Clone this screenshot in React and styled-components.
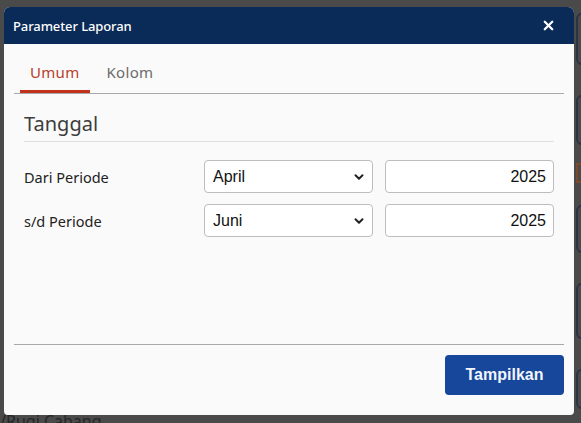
import React, { useState } from 'react'
import styled, { createGlobalStyle } from 'styled-components'
import { X, ChevronDown } from 'lucide-react'

const GlobalStyle = createGlobalStyle`
    html, body {
        margin: 0;
        padding: 0;
        background: #4a4a4a;
        overflow: hidden;
    }
    * {
        box-sizing: border-box;
    }
`

const months = ['Januari', 'Februari', 'Maret', 'April', 'Mei', 'Juni', 'Juli', 'Agustus', 'September', 'Oktober', 'November', 'Desember']

const App = () => {
    const [tab, setTab] = useState('umum')
    const [fromMonth, setFromMonth] = useState('April')
    const [toMonth, setToMonth] = useState('Juni')
    const [fromYear, setFromYear] = useState('2025')
    const [toYear, setToYear] = useState('2025')

    return (
        <>
            <GlobalStyle />
            <Page>
                <Main>
                    <Modal>
                        <Header>
                            <Title>Parameter Laporan</Title>
                            <CloseButton title="tutup">
                                <X size={15} strokeWidth={3.6} />
                            </CloseButton>
                        </Header>
                        <Body>
                            <TabList>
                                <Tab isActive={tab === 'umum'} onClick={() => setTab('umum')}>Umum</Tab>
                                <Tab isActive={tab === 'kolom'} onClick={() => setTab('kolom')}>Kolom</Tab>
                            </TabList>
                            <Panel>
                                <SectionTitle>Tanggal</SectionTitle>
                                <Row>
                                    <Label>Dari Periode</Label>
                                    <SelectWrap>
                                        <Select value={fromMonth} onChange={ev => setFromMonth(ev.target.value)}>
                                            {months.map(m => <option key={m}>{m}</option>)}
                                        </Select>
                                        <Chevron><ChevronDown size={14} strokeWidth={3.4} /></Chevron>
                                    </SelectWrap>
                                    <YearInput value={fromYear} onChange={ev => setFromYear(ev.target.value)} />
                                </Row>
                                <Row>
                                    <Label>s/d Periode</Label>
                                    <SelectWrap>
                                        <Select value={toMonth} onChange={ev => setToMonth(ev.target.value)}>
                                            {months.map(m => <option key={m}>{m}</option>)}
                                        </Select>
                                        <Chevron><ChevronDown size={14} strokeWidth={3.4} /></Chevron>
                                    </SelectWrap>
                                    <YearInput value={toYear} onChange={ev => setToYear(ev.target.value)} />
                                </Row>
                            </Panel>
                        </Body>
                        <Footer>
                            <PrimaryButton>Tampilkan</PrimaryButton>
                        </Footer>
                    </Modal>
                    <BehindText>/Rugi Cabang</BehindText>
                </Main>
                <GhostColumn>
                    <GhostBox h={52} />
                    <GhostBox h={50} />
                    <GhostMark />
                    <GhostBox h={48} />
                    <GhostBox h={56} />
                    <GhostBox h={40} />
                </GhostColumn>
            </Page>
        </>
    )
}

const Page = styled.div`
    display: flex;
    gap: 2px;
    padding: 7px 0 0 4px;
    height: 423px;
    overflow: hidden;
`

const Main = styled.div`
    display: flex;
    flex-direction: column;
    width: 570px;
    flex-shrink: 0;
`

const Modal = styled.div`
    display: flex;
    flex-direction: column;
    flex-shrink: 0;
    height: 408px;
    background: #fafafa;
    border-radius: 6px 6px 4px 4px;
    overflow: hidden;
`

const Header = styled.div`
    display: flex;
    align-items: center;
    justify-content: space-between;
    height: 37px;
    padding: 0 18px 0 9px;
    background: #0a2a57;
    color: #ffffff;
`

const Title = styled.div`
    font-family: "Noto Sans", sans-serif;
    font-size: 13px;
    font-weight: 500;
    letter-spacing: -0.1px;
`

const CloseButton = styled.button`
    display: flex;
    align-items: center;
    justify-content: center;
    background: none;
    border: none;
    padding: 0;
    color: #ffffff;
    cursor: pointer;
`

const Body = styled.div`
    flex: 1;
    padding: 9px 10px 0 10px;
`

const TabList = styled.div`
    display: flex;
    padding-left: 6px;
    border-bottom: 1px solid #a9a9a9;
`

const Tab = styled.button`
    height: 40px;
    padding: 0 10px;
    margin-right: 7px;
    background: none;
    border: none;
    border-bottom: 3px solid ${props => props.isActive ? '#c0321c' : 'transparent'};
    font-family: "Noto Sans", sans-serif;
    font-size: 15px;
    color: ${props => props.isActive ? '#b8402b' : '#6b6b6b'};
    letter-spacing: 0.3px;
    cursor: pointer;
`

const Panel = styled.div`
    display: flex;
    flex-direction: column;
    gap: 11px;
    padding: 0 10px;
`

const SectionTitle = styled.div`
    padding: 16px 0 4px;
    margin-bottom: 7px;
    border-bottom: 1px solid #dedede;
    font-family: "Noto Sans", sans-serif;
    font-size: 20px;
    color: #3d3d3d;
`

const Row = styled.div`
    display: grid;
    grid-template-columns: 168px 169px 169px;
    column-gap: 12px;
    align-items: center;
`

const Label = styled.div`
    font-family: "Noto Sans", sans-serif;
    font-size: 14.5px;
    color: #222222;
`

const SelectWrap = styled.div`
    position: relative;
    display: flex;
`

const Select = styled.select`
    appearance: none;
    width: 100%;
    height: 33px;
    padding: 0 28px 0 8px;
    background: #ffffff;
    border: 1px solid #bdbdbd;
    border-radius: 4px;
    font-family: "Liberation Sans", Arial, sans-serif;
    font-size: 16px;
    color: #111111;
    outline: none;
`

const Chevron = styled.span`
    position: absolute;
    right: 7px;
    top: 10px;
    display: flex;
    color: #222222;
    pointer-events: none;
`

const YearInput = styled.input`
    width: 100%;
    height: 33px;
    padding: 0 7px;
    background: #ffffff;
    border: 1px solid #bdbdbd;
    border-radius: 4px;
    text-align: right;
    font-family: "Liberation Sans", Arial, sans-serif;
    font-size: 16px;
    color: #111111;
    outline: none;
`

const Footer = styled.div`
    display: flex;
    justify-content: flex-end;
    margin: 0 10px;
    padding: 10px 0 20px;
    border-top: 1px solid #a9a9a9;
`

const PrimaryButton = styled.button`
    width: 119px;
    height: 40px;
    background: #16479a;
    border: none;
    border-radius: 4px;
    font-family: "Liberation Sans", Arial, sans-serif;
    font-size: 16px;
    font-weight: bold;
    color: #f2f5fb;
    cursor: pointer;
`

const BehindText = styled.div`
    margin-left: -4px;
    font-family: "Noto Sans", sans-serif;
    font-size: 16px;
    line-height: 12px;
    color: #262626;
`

const GhostColumn = styled.div`
    display: flex;
    flex-direction: column;
    gap: 30px;
    padding-top: 6px;
`

const GhostBox = styled.div`
    width: 30px;
    height: ${props => props.h}px;
    border: 2px solid #2a3442;
    border-radius: 6px;
`

const GhostMark = styled.div`
    width: 12px;
    height: 20px;
    margin: -12px 0 -8px;
    border: 2px solid #7a4a2a;
    border-right: none;
`

export default App
